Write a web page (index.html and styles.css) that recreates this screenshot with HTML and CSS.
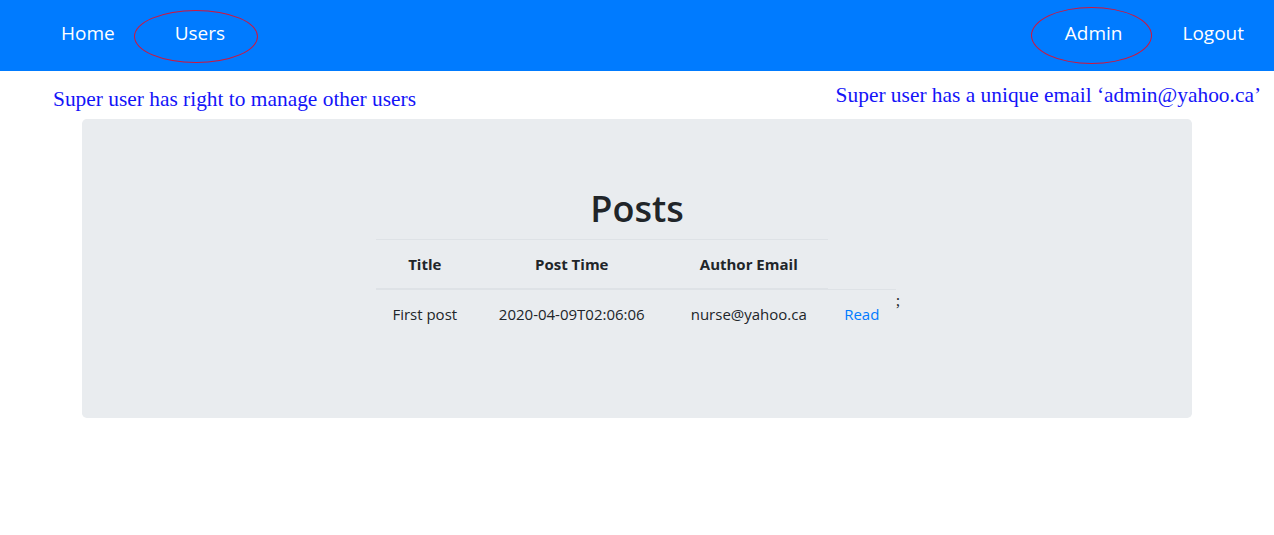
FILE: index.html
```html
<!DOCTYPE html>
<html>
<head>
<meta charset="utf-8">
<link rel="stylesheet" href="styles.css">
</head>
<body>
<nav class="navbar">
  <div class="nav-group">
    <a class="nav-link" href="#">Home</a>
    <a class="nav-link circled" href="#">Users<span class="ring ring-users"></span></a>
  </div>
  <div class="nav-group">
    <a class="nav-link circled" href="#">Admin<span class="ring ring-admin"></span></a>
    <a class="nav-link" href="#">Logout</a>
  </div>
</nav>
<div class="notes">
  <span class="note note-left">Super user has right to manage other users</span>
  <span class="note note-right">Super user has a unique email ‘admin@yahoo.ca’</span>
</div>
<div class="container">
  <div class="jumbotron">
    <h1 class="title">Posts</h1>
    <div class="table-row">
      <table class="table">
        <thead>
          <tr>
            <th class="c1">Title</th>
            <th class="c2">Post Time</th>
            <th class="c3">Author Email</th>
          </tr>
        </thead>
        <tbody>
          <tr>
            <td class="c1">First post</td>
            <td class="c2">2020-04-09T02:06:06</td>
            <td class="c3">nurse@yahoo.ca</td>
            <td class="c4"><a class="read" href="#">Read</a></td>
          </tr>
        </tbody>
      </table>
      <span class="semi">;</span>
    </div>
  </div>
</div>
</body>
</html>
```

FILE: styles.css
```css
* { box-sizing: border-box; }
body {
  margin: 0;
  font-family: "Open Sans", "Noto Sans", sans-serif;
  font-size: 15px;
  line-height: 1.5;
  color: #212529;
  background: #fff;
}
.navbar {
  background: #007bff;
  height: 71px;
  display: flex;
  justify-content: space-between;
  align-items: center;
  padding: 0 0 6px 31px;
}
.nav-group { display: flex; }
.nav-link {
  position: relative;
  color: #fff;
  text-decoration: none;
  font-size: 19px;
  padding: 0 30px;
  line-height: 30px;
}
.ring {
  position: absolute;
  border: 1px solid #d0163c;
  border-radius: 50%;
  pointer-events: none;
}
.ring-users { left: -11px; top: -8px; width: 124px; height: 53px; }
.ring-admin { left: -4px; top: -11px; width: 121px; height: 57px; }
.notes {
  height: 48px;
  display: flex;
  justify-content: space-between;
  align-items: flex-start;
  padding: 0 13px 0 53px;
  font-family: "Liberation Serif", "Times New Roman", serif;
  font-size: 21.4px;
  line-height: 24px;
  color: #1414f8;
}
.note-left { margin-top: 16px; }
.note-right { margin-top: 12px; }
.container {
  max-width: 1140px;
  margin: 0 auto;
  padding: 0 15px;
}
.jumbotron {
  background: #e9ecef;
  border-radius: 4.8px;
  padding: 64px 32px 64px;
  text-align: center;
}
.title {
  margin: 0 0 6px;
  padding-top: 2px;
  font-size: 36px;
  font-weight: 600;
  line-height: 48px;
}
.table-row {
  display: flex;
  justify-content: center;
  align-items: flex-start;
  padding-left: 2px;
}
.table {
  border-collapse: collapse;
  margin-bottom: 16px;
}
.table th, .table td {
  padding: 12px 0;
  line-height: 24px;
  text-align: center;
  border-top: 1px solid #dee2e6;
}
.table th { font-weight: 700; border-bottom: 2px solid #dee2e6; }
.c1 { width: 98px; }
.c2 { width: 196px; }
.c3 { width: 158px; }
.c4 { width: 68px; }
.read { color: #007bff; text-decoration: none; }
.semi {
  font-family: "Liberation Serif", "Times New Roman", serif;
  font-size: 16px;
  line-height: 20px;
  margin-top: 52px;
}
```
